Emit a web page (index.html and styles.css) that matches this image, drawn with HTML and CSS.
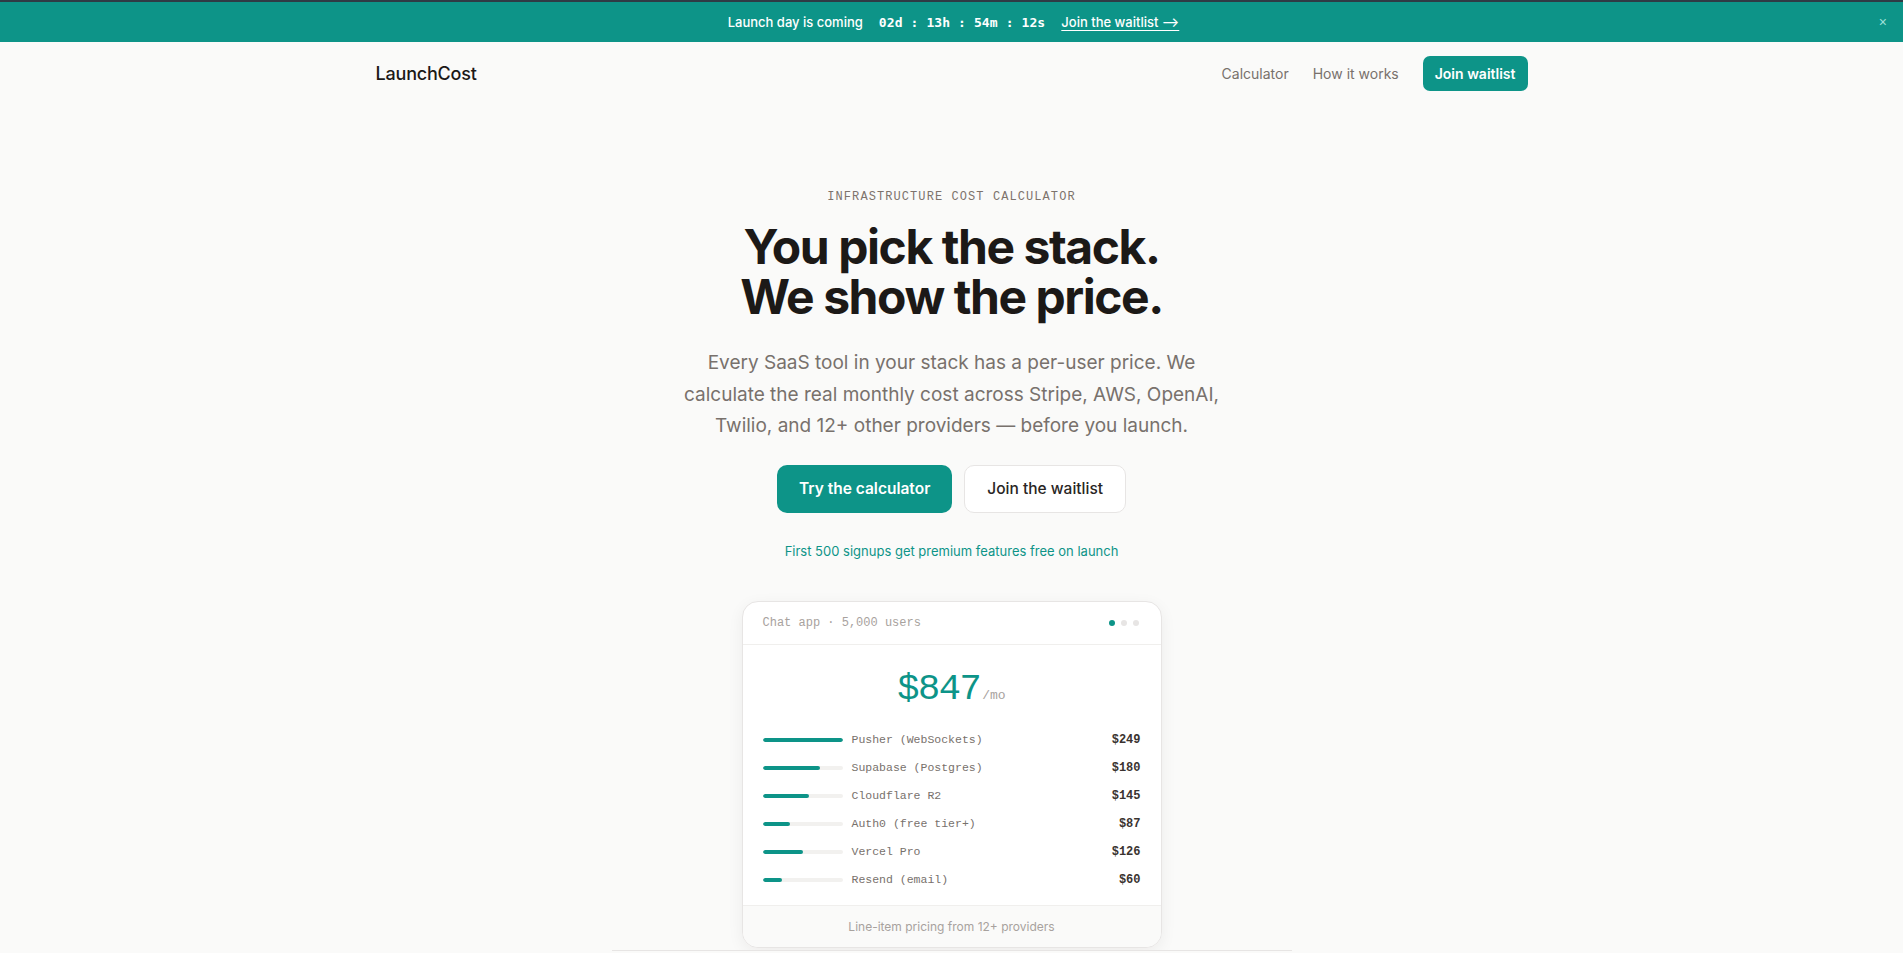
FILE: index.html
```html
<!DOCTYPE html>
<html lang="en">
<head>
<meta charset="utf-8">
<title>LaunchCost</title>
<link rel="stylesheet" href="styles.css">
</head>
<body>
<div class="banner">
  <div class="banner-inner">
    <span class="banner-text">Launch day is coming</span>
    <span class="timer">02d : 13h : 54m : 12s</span>
    <a class="banner-link" href="#">Join the waitlist ⟶</a>
  </div>
  <button class="banner-close" aria-label="Close">×</button>
</div>

<header class="nav">
  <div class="nav-inner">
    <a class="logo" href="#">LaunchCost</a>
    <nav class="nav-links">
      <a href="#">Calculator</a>
      <a href="#">How it works</a>
      <a class="nav-btn" href="#">Join waitlist</a>
    </nav>
  </div>
</header>

<main class="hero">
  <p class="eyebrow">INFRASTRUCTURE COST CALCULATOR</p>
  <h1 class="title"><span class="line">You pick the stack.</span><span class="line">We show the price.</span></h1>
  <p class="lead">Every SaaS tool in your stack has a per-user price. We calculate the real monthly cost across Stripe, AWS, OpenAI, Twilio, and 12+ other providers — before you launch.</p>
  <div class="actions">
    <a class="btn btn-primary" href="#">Try the calculator</a>
    <a class="btn btn-secondary" href="#">Join the waitlist</a>
  </div>
  <p class="perk">First 500 signups get premium features free on launch</p>

  <div class="card">
    <div class="card-head">
      <span class="card-title">Chat app · 5,000 users</span>
      <span class="dots"><i class="dot on"></i><i class="dot"></i><i class="dot"></i></span>
    </div>
    <div class="card-body">
      <div class="total"><span class="amount">$847</span><span class="per">/mo</span></div>
      <ul class="rows">
        <li class="row"><span class="bar"><span class="fill" style="width:100%"></span></span><span class="name">Pusher (WebSockets)</span><span class="price">$249</span></li>
        <li class="row"><span class="bar"><span class="fill" style="width:72%"></span></span><span class="name">Supabase (Postgres)</span><span class="price">$180</span></li>
        <li class="row"><span class="bar"><span class="fill" style="width:58%"></span></span><span class="name">Cloudflare R2</span><span class="price">$145</span></li>
        <li class="row"><span class="bar"><span class="fill" style="width:34%"></span></span><span class="name">Auth0 (free tier+)</span><span class="price">$87</span></li>
        <li class="row"><span class="bar"><span class="fill" style="width:50%"></span></span><span class="name">Vercel Pro</span><span class="price">$126</span></li>
        <li class="row"><span class="bar"><span class="fill" style="width:24%"></span></span><span class="name">Resend (email)</span><span class="price">$60</span></li>
      </ul>
    </div>
    <div class="card-foot">Line-item pricing from 12+ providers</div>
  </div>
  <div class="divider"></div>
</main>
</body>
</html>
```

FILE: styles.css
```css
* { box-sizing: border-box; }
html, body { margin: 0; padding: 0; }
body {
  background: #fafaf9;
  font-family: Inter, "Noto Sans", "Liberation Sans", sans-serif;
  color: #1c1917;
  overflow: hidden;
}
a { text-decoration: none; color: inherit; }

.banner {
  position: relative;
  height: 42px;
  background: #0d9488;
  border-top: 2px solid #2f3b45;
  display: flex;
  align-items: center;
  justify-content: center;
  color: #fff;
}
.banner-inner {
  display: flex;
  align-items: center;
  gap: 16px;
  font-size: 13px;
  padding-left: 4px;
}
.banner-text { font-weight: 500; }
.timer {
  font-family: "DejaVu Sans Mono", "Liberation Mono", monospace;
  font-weight: 700;
  font-size: 13px;
  letter-spacing: 0.1px;
}
.banner-link {
  font-weight: 500;
  text-decoration: underline;
  text-underline-offset: 3px;
}
.banner-close {
  position: absolute;
  right: 12px;
  top: 50%;
  transform: translateY(-50%);
  background: none;
  border: 0;
  color: #9ee0d8;
  font-size: 14px;
  padding: 4px;
  cursor: pointer;
}

.nav-inner {
  max-width: 1200px;
  margin: 0 auto;
  padding: 14px 24px;
  display: flex;
  align-items: center;
  justify-content: space-between;
}
.logo { font-size: 18px; font-weight: 500; color: #1c1917; letter-spacing: -0.2px; }
.nav-links { display: flex; align-items: center; gap: 24px; font-size: 14px; color: #78716c; }
.nav-btn {
  background: #0d9488;
  color: #fff;
  font-weight: 600;
  height: 35px;
  padding: 0 12px;
  border-radius: 7px;
  display: inline-flex;
  align-items: center;
}

.hero {
  display: flex;
  flex-direction: column;
  align-items: center;
  padding-top: 84px;
  text-align: center;
}
.eyebrow {
  margin: 0;
  font-family: "Liberation Mono", "DejaVu Sans Mono", monospace;
  font-size: 12px;
  line-height: 16px;
  letter-spacing: 0.09em;
  color: #7d736c;
}
.title {
  margin: 17px 0 0;
  font-size: 48px;
  line-height: 50px;
  font-weight: 700;
  letter-spacing: -0.03em;
  color: #1c1917;
  display: flex;
  flex-direction: column;
  align-items: center;
}
.title .line { display: block; height: 50px; }
.lead {
  margin: 25px 0 0;
  max-width: 560px;
  font-size: 19px;
  line-height: 31.5px;
  color: #78716c;
}
.actions { display: flex; gap: 12px; margin-top: 23px; }
.btn {
  height: 48px;
  display: inline-flex;
  align-items: center;
  justify-content: center;
  border-radius: 10px;
  font-size: 15.5px;
  font-weight: 500;
  white-space: nowrap;
}
.btn-primary { background: #0d9488; color: #fff; padding: 0 22px; font-weight: 600; }
.btn-secondary { background: #fff; color: #292524; border: 1px solid #e7e5e4; padding: 0 22px; }
.perk { margin: 28px 0 0; font-size: 13px; line-height: 20px; color: #0d9488; }

.card {
  margin-top: 40px;
  width: 420px;
  background: #fff;
  border: 1px solid #e7e5e4;
  border-radius: 16px;
  box-shadow: 0 4px 16px rgba(28, 25, 23, 0.06);
  overflow: hidden;
  text-align: left;
}
.card-head {
  height: 43px;
  padding: 0 20px 0 20px;
  display: flex;
  align-items: center;
  justify-content: space-between;
  border-bottom: 1px solid #f0efed;
}
.card-title {
  font-family: "Liberation Mono", "DejaVu Sans Mono", monospace;
  font-size: 12px;
  color: #a8a29e;
}
.dots { display: flex; gap: 6px; padding-right: 2px; }
.dot { width: 6px; height: 6px; border-radius: 50%; background: #e7e5e4; display: block; }
.dot.on { background: #0d9488; }

.card-body { padding: 22px 20px 11px; }
.total { text-align: center; line-height: 44px; }
.amount {
  font-family: "Liberation Mono", "DejaVu Sans Mono", monospace;
  font-size: 37px;
  letter-spacing: -0.04em;
  color: #0d9488;
}
.per {
  font-family: "Liberation Mono", "DejaVu Sans Mono", monospace;
  font-size: 13px;
  color: #a8a29e;
  margin-left: 2px;
}
.rows { list-style: none; margin: 8px 0 0; padding: 0; }
.row { display: flex; align-items: center; height: 28px; }
.bar { width: 80px; height: 4px; border-radius: 2px; background: #f2f1ef; flex: none; overflow: hidden; }
.fill { display: block; height: 100%; background: #0d9488; border-radius: 2px; }
.name {
  flex: 1;
  margin-left: 9px;
  font-family: "Liberation Mono", "DejaVu Sans Mono", monospace;
  font-size: 11.5px;
  color: #78716c;
}
.price {
  font-family: "Liberation Mono", "DejaVu Sans Mono", monospace;
  font-size: 12px;
  font-weight: 700;
  color: #3a3330;
}
.card-foot {
  background: #fafaf9;
  border-top: 1px solid #f0efed;
  height: 42px;
  display: flex;
  align-items: center;
  justify-content: center;
  font-size: 12px;
  color: #a8a29e;
}
.divider { width: 680px; border-top: 1px solid #e7e5e4; margin-top: 2px; }
```
